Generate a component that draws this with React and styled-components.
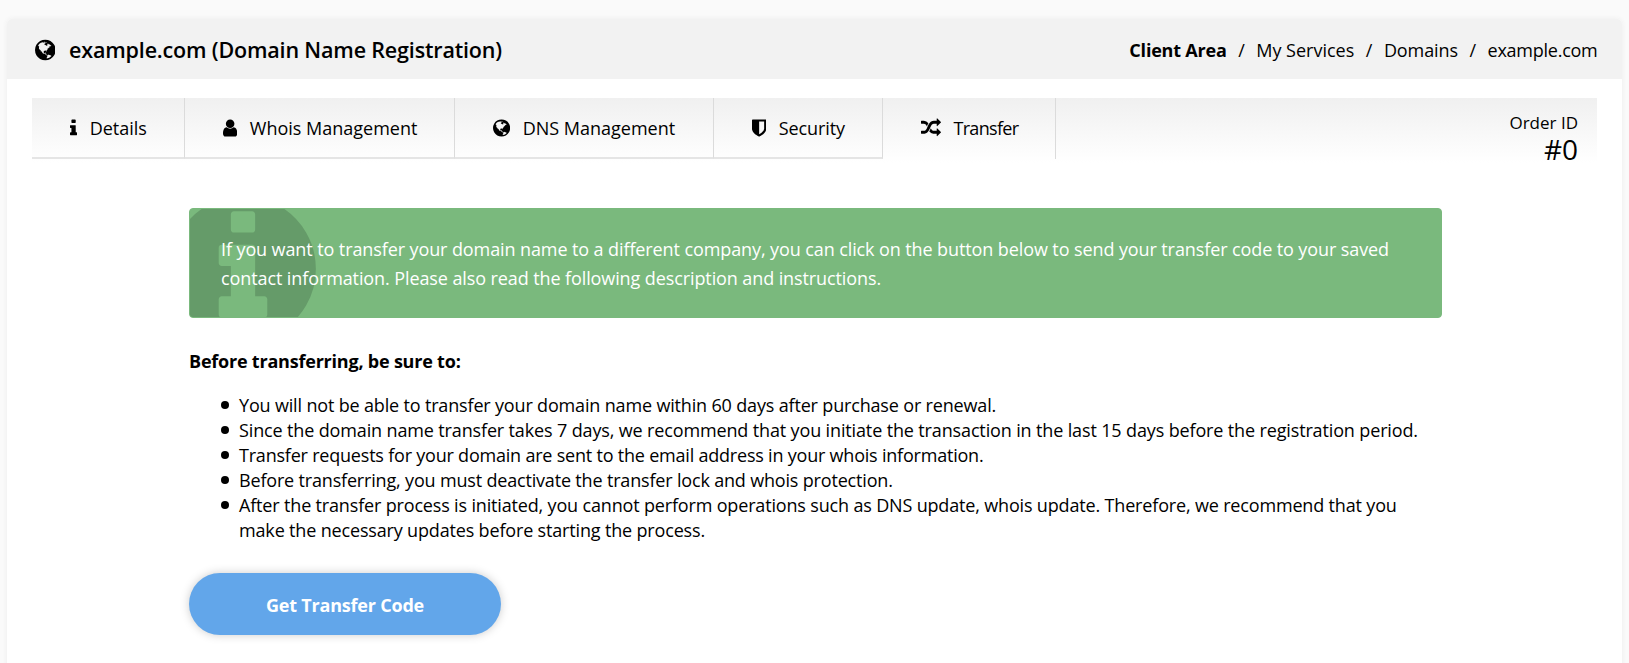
import React from "react";
import styled, { createGlobalStyle } from "styled-components";

const GlobalStyle = createGlobalStyle`
  *, *::before, *::after { box-sizing: border-box; }
  body {
    margin: 0;
    background: #fafafa;
    color: #000;
    font-family: "Open Sans", "Noto Sans", sans-serif;
    font-size: 18px;
  }
`;

const glyphs = {
  globe: {
    left: 128,
    width: 1536,
    d: "M896 128q209 0 385.5 103t279.5 279.5 103 385.5-103 385.5-279.5 279.5-385.5 103-385.5-103-279.5-279.5-103-385.5 103-385.5 279.5-279.5 385.5-103zm274 521q-2 1-9.5 9.5t-13.5 9.5q2 0 4.5-5t5-11 3.5-7q6-7 22-15 14-6 52-12 34-8 51 11-2-2 9.5-13t14.5-12q3-2 15-4.5t15-7.5l2-22q-12 1-17.5-7t-6.5-21q0 2-6 8 0-7-4.5-8t-11.5 1-9 1q-10-3-15-7.5t-8-16.5-4-15q-2-5-9.5-10.5t-9.5-10.5q-1-2-2.5-5.5t-3-6.5-4-5.5-5.5-2.5-7 5-7.5 10-4.5 5q-3-2-6-1.5t-4.5 1-4.5 3-5 3.5q-3 2-8.5 3t-8.5 2q15-5-1-11-10-4-16-3 9-4 7.5-12t-8.5-14h5q-1-4-8.5-8.5t-17.5-8.5-13-6q-8-5-34-9.5t-33-.5q-5 6-4.5 10.5t4 14 3.5 12.5q1 6-5.5 13t-6.5 12q0 7 14 15.5t10 21.5q-3 8-16 16t-16 12q-5 8-1.5 18.5t10.5 16.5q2 2 1.5 4t-3.5 4.5-5.5 4-6.5 3.5l-3 2q-11 5-20.5-6t-13.5-26q-7-25-16-30-23-8-29 1-5-13-41-26-25-9-58-4 6-1 0-15-7-15-19-12 3-6 4-17.5t1-13.5q3-13 12-23 1-1 7-8.5t9.5-13.5.5-6q35 4 50-11 5-5 11.5-17t10.5-17q9-6 14-5.5t14.5 5.5 14.5 5q14 1 15.5-11t-7.5-20q12 1 3-17-4-7-8-9-12-4-27 5-8 4 2 8-1-1-9.5 10.5t-16.5 17.5-16-5q-1-1-5.5-13.5t-9.5-13.5q-8 0-16 15 3-8-11-15t-24-8q19-12-8-27-7-4-20.5-5t-19.5 4q-5 7-5.5 11.5t5 8 10.5 5.5 11.5 4 8.5 3q14 10 8 14-2 1-8.5 3.5t-11.5 4.5-6 4q-3 4 0 14t-2 14q-5-5-9-17.5t-7-16.5q7 9-25 6l-10-1q-4 0-16 2t-20.5 1-13.5-8q-4-8 0-20 1-4 4-2-4-3-11-9.5t-10-8.5q-46 15-94 41 6 1 12-1 5-2 13-6.5t10-5.5q34-14 42-7l5-5q14 16 20 25-7-4-30-1-20 6-22 12 7 12 5 18-4-3-11.5-10t-14.5-11-15-5q-16 0-22 1-146 80-235 222 7 7 12 8 4 1 5 9t2.5 11 11.5-3q9 8 3 19 1-1 44 27 19 17 21 21 3 11-10 18-1-2-9-9t-9-4q-3 5 .5 18.5t10.5 12.5q-7 0-9.5 16t-2.5 35.5-1 23.5l2 1q-3 12 5.5 34.5t21.5 19.5q-13 3 20 43 6 8 8 9 3 2 12 7.5t15 10 10 10.5q4 5 10 22.5t14 23.5q-2 6 9.5 20t10.5 23q-1 0-2.5 1t-2.5 1q3 7 15.5 14t15.5 13q1 3 2 10t3 11 8 2q2-20-24-62-15-25-17-29-3-5-5.5-15.5t-4.5-14.5q2 0 6 1.5t8.5 3.5 7.5 4 2 3q-3 7 2 17.5t12 18.5 17 19 12 13q6 6 14 19.5t0 13.5q9 0 20 10t17 20q5 8 8 26t5 24q2 7 8.5 13.5t12.5 9.5l16 8 13 7q5 2 18.5 10.5t21.5 11.5q10 4 16 4t14.5-2.5 13.5-3.5q15-2 29 15t21 21q36 19 55 11-2 1 .5 7.5t8 15.5 9 14.5 5.5 8.5q5 6 18 15t18 15q6-4 7-9-3 8 7 20t18 10q14-3 14-32-31 15-49-18 0-1-2.5-5.5t-4-8.5-2.5-8.5 0-7.5 5-3q9 0 10-3.5t-2-12.5-4-13q-1-8-11-20t-12-15q-5 9-16 8t-16-9q0 1-1.5 5.5t-1.5 6.5q-13 0-15-1 1-3 2.5-17.5t3.5-22.5q1-4 5.5-12t7.5-14.5 4-12.5-4.5-9.5-17.5-2.5q-19 1-26 20-1 3-3 10.5t-5 11.5-9 7q-7 3-24 2t-24-5q-13-8-22.5-29t-9.5-37q0-10 2.5-26.5t3-25-5.5-24.5q3-2 9-9.5t10-10.5q2-1 4.5-1.5t4.5 0 4-1.5 3-6q-1-1-4-3-3-3-4-3 7 3 28.5-1.5t27.5 1.5q15 11 22-2 0-1-2.5-9.5t-.5-13.5q5 27 29 9 3 3 15.5 5t17.5 5q3 2 7 5.5t5.5 4.5 5-.5 8.5-6.5q10 14 12 24 11 40 19 44 7 3 11 2t4.5-9.5 0-14-1.5-12.5l-1-8v-18l-1-8q-15-3-18.5-12t1.5-18.5 15-18.5q1-1 8-3.5t15.5-6.5 12.5-8q21-19 15-35 7 0 11-9-1 0-5-3t-7.5-5-4.5-2q9-5 2-16 5-3 7.5-11t7.5-10q9 12 21 2 7-8 1-16 5-7 20.5-10.5t18.5-9.5q7 2 8-2t1-12 3-12q4-5 15-9t13-5l17-11q3-4 0-4 18 2 31-11 10-11-6-20 3-6-3-9.5t-15-5.5q3-1 11.5-.5t10.5-1.5q15-10-7-16-17-5-43 12zm-163 877q206-36 351-189-3-3-12.5-4.5t-12.5-3.5q-18-7-24-8 1-7-2.5-13t-8-9-12.5-8-11-7q-2-2-7-6t-7-5.5-7.5-4.5-8.5-2-10 1l-3 1q-3 1-5.5 2.5t-5.5 3-4 3 0 2.5q-21-17-36-22-5-1-11-5.5t-10.5-7-10-1.5-11.5 7q-5 5-6 15t-2 13q-7-5 0-17.5t2-18.5q-3-6-10.5-4.5t-12 4.5-11.5 8.5-9 6.5-8.5 5.5-8.5 7.5q-3 4-6 12t-5 11q-2-4-11.5-6.5t-9.5-5.5q2 10 4 35t5 38q7 31-12 48-27 25-29 40-4 22 12 26 0 7-8 20.5t-7 21.5q0 6 2 16z",
  },
  info: {
    left: 576,
    width: 640,
    d: "M1216 1344v128q0 26-19 45t-45 19h-512q-26 0-45-19t-19-45v-128q0-26 19-45t45-19h64v-384h-64q-26 0-45-19t-19-45v-128q0-26 19-45t45-19h384q26 0 45 19t19 45v576h64q26 0 45 19t19 45zm-128-1152v192q0 26-19 45t-45 19h-256q-26 0-45-19t-19-45v-192q0-26 19-45t45-19h256q26 0 45 19t19 45z",
  },
  user: {
    left: 256,
    width: 1280,
    d: "M1536 1399q0 109-62.5 187t-150.5 78h-854q-88 0-150.5-78t-62.5-187q0-85 8.5-160.5t31.5-152 58.5-131 94-89 134.5-34.5q131 128 313 128t313-128q76 0 134.5 34.5t94 89 58.5 131 31.5 152 8.5 160.5zm-256-887q0 159-112.5 271.5t-271.5 112.5-271.5-112.5-112.5-271.5 112.5-271.5 271.5-112.5 271.5 112.5 112.5 271.5z",
  },
  shield: {
    left: 256,
    width: 1280,
    d: "M1344 960v-640h-448v1137q119-63 213-137 235-184 235-360zm192-768v768q0 86-33.5 170.5t-83 150-118 127.5-126.5 103-121 77.5-89.5 49.5-42.5 20q-12 6-26 6t-26-6q-16-7-42.5-20t-89.5-49.5-121-77.5-126.5-103-118-127.5-83-150-33.5-170.5v-768q0-26 19-45t45-19h1152q26 0 45 19t19 45z",
  },
  random: {
    left: 0,
    width: 1792,
    d: "M666 481q-60 92-137 273-22-45-37-72.5t-40.5-63.5-51-56.5-63-35-81.5-14.5h-224q-14 0-23-9t-9-23v-192q0-14 9-23t23-9h224q250 0 410 225zm1126 799q0 14-9 23l-320 320q-9 9-23 9-13 0-22.5-9.5t-9.5-22.5v-192q-32 0-85 .5t-81 1-73-1-71-5-64-10.5-63-18.5-58-28.5-59-40-55-53.5-56-69.5q59-93 136-273 22 45 37 72.5t40.5 63.5 51 56.5 63 35 81.5 14.5h256v-192q0-14 9-23t23-9q12 0 24 10l319 319q9 9 9 23zm0-896q0 14-9 23l-320 320q-9 9-23 9-13 0-22.5-9.5t-9.5-22.5v-192h-256q-48 0-87 15t-69 45-51 61.5-45 77.5q-32 62-78 171-29 66-49.5 111t-54 105-64 100-74 83-90 68.5-106.5 42-128 16.5h-224q-14 0-23-9t-9-23v-192q0-14 9-23t23-9h224q48 0 87-15t69-45 51-61.5 45-77.5q32-62 78-171 29-66 49.5-111t54-105 64-100 74-83 90-68.5 106.5-42 128-16.5h256v-192q0-14 9-23t23-9q12 0 24 10l319 319q9 9 9 23z",
  },
  infoCircle: {
    left: 0,
    width: 1792,
    d: "M1152 1376v-160q0-14-9-23t-23-9h-96v-512q0-14-9-23t-23-9h-320q-14 0-23 9t-9 23v160q0 14 9 23t23 9h96v320h-96q-14 0-23 9t-9 23v160q0 14 9 23t23 9h448q14 0 23-9t9-23zm-128-896v-160q0-14-9-23t-23-9h-192q-14 0-23 9t-9 23v160q0 14 9 23t23 9h192q14 0 23-9t9-23zm640 416q0 209-103 385.5t-279.5 279.5-385.5 103-385.5-103-279.5-279.5-103-385.5 103-385.5 279.5-279.5 385.5-103 385.5 103 279.5 279.5 103 385.5z",
  },
};

function Icon({ name, size = 20, className }) {
  const { left, width, d } = glyphs[name];
  return (
    <svg
      className={className}
      width={(size * width) / 1792}
      height={size}
      viewBox={`${left} 0 ${width} 1792`}
      fill="currentColor"
      aria-hidden="true"
    >
      <path d={d} />
    </svg>
  );
}

const Page = styled.div`
  height: 100vh;
  padding: 19px 7px 0;
  overflow: hidden;
`;

const Card = styled.main`
  height: 100vh;
  background: #fff;
  border-radius: 5px;
  box-shadow: 0 0 5px #ededed;
`;

const CardHeader = styled.header`
  display: flex;
  align-items: center;
  justify-content: space-between;
  height: 60px;
  padding: 2px 24.5px 0 27.5px;
  background: #f2f2f2;
  border-radius: 5px 5px 0 0;
`;

const Title = styled.h1`
  display: flex;
  align-items: center;
  gap: 14px;
  margin: 0;
  font-size: 21.5px;
  font-weight: 600;
  line-height: 30px;
  letter-spacing: -0.17px;
`;

const Breadcrumb = styled.nav`
  display: flex;
  gap: 11.5px;
  line-height: 26px;
`;

const Crumb = styled.a`
  color: inherit;
  font-weight: ${(p) => (p.$strong ? 700 : 400)};
  letter-spacing: ${(p) => p.$tracking || 0}px;
`;

const TabBar = styled.div`
  display: flex;
  justify-content: space-between;
  height: 65px;
  margin: 19px 25px 0;
  background: linear-gradient(#f0f0f0, #fff);
`;

const Tabs = styled.div`
  display: flex;
  height: 61px;
`;

const Tab = styled.button`
  display: flex;
  align-items: center;
  gap: 13px;
  width: ${(p) => p.$width}px;
  padding: 1px 0 ${(p) => (p.$active ? 2 : 0)}px 37.5px;
  border: solid;
  border-width: 0 1px ${(p) => (p.$active ? 0 : 2)}px 0;
  border-color: #dbdbdb #dbdbdb #e5e5e5;
  background: none;
  color: inherit;
  font: inherit;
  letter-spacing: ${(p) => p.$tracking || 0}px;
`;

const Order = styled.div`
  padding: 14px 19px 0 0;
  font-size: 17px;
  line-height: 22px;
  text-align: right;
`;

const OrderNumber = styled.div`
  font-size: 28px;
  line-height: 30px;
`;

const Content = styled.section`
  width: 1253px;
  margin: 45px auto 0 182px;
`;

const Notice = styled.div`
  position: relative;
  height: 110px;
  padding: 26px 31px;
  overflow: hidden;
  border: 1px solid #7ab97d;
  border-radius: 4px;
  background: #7ab97d;
  color: #fff;
  line-height: 29px;
  letter-spacing: -0.1px;

  p {
    position: relative;
    margin: 0;
  }
`;

const NoticeIcon = styled(Icon)`
  position: absolute;
  top: -25px;
  left: -32px;
  color: #659b69;
`;

const Subheading = styled.h2`
  margin: 31px 0 0;
  font-size: 18px;
  font-weight: 700;
  line-height: 25px;
  letter-spacing: -0.21px;
`;

const Rules = styled.ul`
  width: 1240px;
  margin: 19px 0 0;
  padding: 0 0 0 32px;
  list-style: none;
  line-height: 25px;
`;

const Rule = styled.li`
  display: flex;
  gap: 10px;
  letter-spacing: ${(p) => p.$tracking}px;

  &::before {
    content: "";
    flex: none;
    width: 8px;
    height: 8px;
    margin-top: 8px;
    border-radius: 50%;
    background: #000;
  }
`;

const PrimaryButton = styled.button`
  display: block;
  width: 312px;
  height: 62px;
  margin: 30px 0 0;
  padding: 2px 0 0;
  border: 0;
  border-radius: 31px;
  background: #62a6ea;
  box-shadow: 0 0 10px #ccc;
  color: #fff;
  font: inherit;
  font-weight: 700;
  letter-spacing: -0.2px;
`;

const tabs = [
  { icon: "info", label: "Details", width: 153 },
  { icon: "user", label: "Whois Management", width: 270 },
  { icon: "globe", label: "DNS Management", width: 259 },
  { icon: "shield", label: "Security", width: 169, tracking: -0.1 },
  { icon: "random", label: "Transfer", width: 173, active: true, tracking: -0.7 },
];

const rules = [
  {
    text: "You will not be able to transfer your domain name within 60 days after purchase or renewal.",
    tracking: -0.165,
  },
  {
    text: "Since the domain name transfer takes 7 days, we recommend that you initiate the transaction in the last 15 days before the registration period.",
    tracking: -0.14,
  },
  {
    text: "Transfer requests for your domain are sent to the email address in your whois information.",
    tracking: -0.21,
  },
  {
    text: "Before transferring, you must deactivate the transfer lock and whois protection.",
    tracking: -0.175,
  },
  {
    text: "After the transfer process is initiated, you cannot perform operations such as DNS update, whois update. Therefore, we recommend that you make the necessary updates before starting the process.",
    tracking: -0.165,
  },
];

export default function App() {
  return (
    <Page>
      <GlobalStyle />
      <Card>
        <CardHeader>
          <Title>
            <Icon name="globe" size={24} />
            example.com (Domain Name Registration)
          </Title>
          <Breadcrumb>
            <Crumb $strong $tracking={-0.2}>Client Area</Crumb>
            <span>/</span>
            <Crumb>My Services</Crumb>
            <span>/</span>
            <Crumb $tracking={-0.1}>Domains</Crumb>
            <span>/</span>
            <Crumb $tracking={-0.25}>example.com</Crumb>
          </Breadcrumb>
        </CardHeader>
        <TabBar>
          <Tabs>
            {tabs.map((t) => (
              <Tab key={t.label} $width={t.width} $active={t.active} $tracking={t.tracking}>
                <Icon name={t.icon} />
                {t.label}
              </Tab>
            ))}
          </Tabs>
          <Order>
            Order ID
            <OrderNumber>#0</OrderNumber>
          </Order>
        </TabBar>
        <Content>
          <Notice>
            <NoticeIcon name="infoCircle" size={170} />
            <p>
              If you want to transfer your domain name to a different company, you can click on the button below to
              send your transfer code to your saved contact information. Please also read the following description
              and instructions.
            </p>
          </Notice>
          <Subheading>Before transferring, be sure to:</Subheading>
          <Rules>
            {rules.map((r) => (
              <Rule key={r.text} $tracking={r.tracking}>
                {r.text}
              </Rule>
            ))}
          </Rules>
          <PrimaryButton>Get Transfer Code</PrimaryButton>
        </Content>
      </Card>
    </Page>
  );
}
